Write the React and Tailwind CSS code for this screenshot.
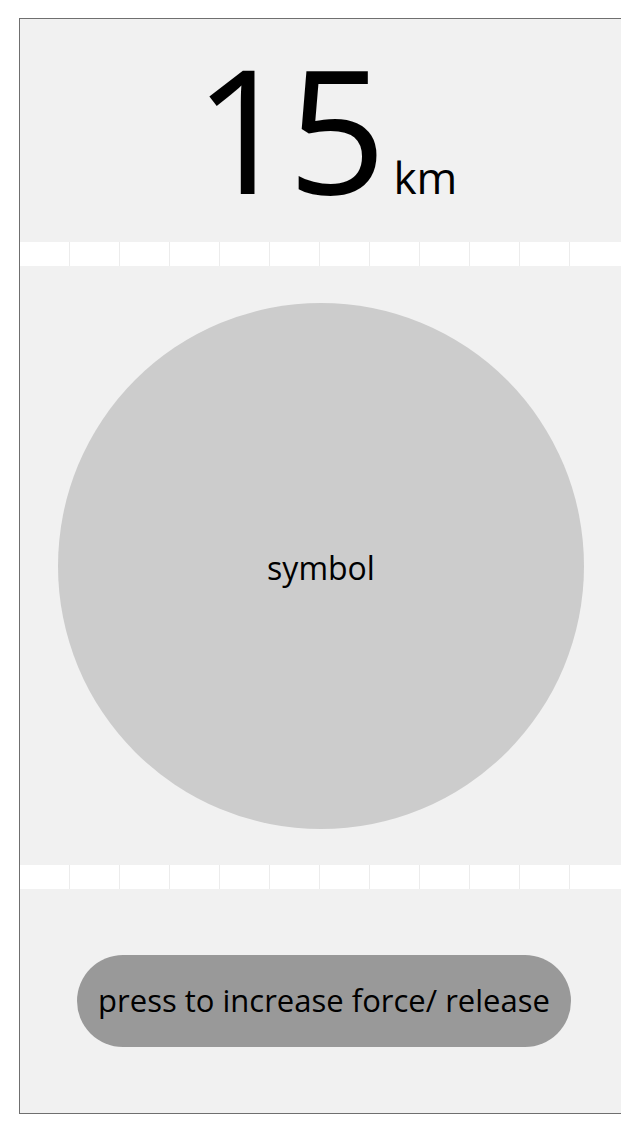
const cells = Array.from({ length: 12 });

function Strip() {
  return (
    <div className="flex h-[24px] bg-white">
      {cells.map((_, i) => (
        <div key={i} className="w-[50px] border-r border-[#ececec] last:border-r-0" />
      ))}
    </div>
  );
}

export default function App() {
  return (
    <div className="w-[640px] h-[1136px] bg-white pt-[18px] pl-[19px] font-['Open_Sans',sans-serif] text-black">
      <div className="w-[602px] border-l border-t border-b border-[#6f6f6f] bg-[#f1f1f1]">
        <div className="h-[223px] flex items-baseline justify-center pl-[10px] pt-[3px]">
          <span className="text-[173px] leading-[210px] tracking-[-5px]">15</span>
          <span className="text-[44px] ml-[12px]">km</span>
        </div>
        <Strip />
        <div className="h-[599px] pt-[37px] pl-[38px]">
          <div className="w-[526px] h-[526px] rounded-full bg-[#cccccc] flex items-center justify-center">
            <span className="text-[32px] mt-[4px]">symbol</span>
          </div>
        </div>
        <Strip />
        <div className="h-[224px] pt-[66px] pl-[57px]">
          <div className="w-[494px] h-[92px] rounded-full bg-[#999999] flex items-center justify-center">
            <span className="text-[31px] mt-[-2px]">press to increase force/ release</span>
          </div>
        </div>
      </div>
    </div>
  );
}
